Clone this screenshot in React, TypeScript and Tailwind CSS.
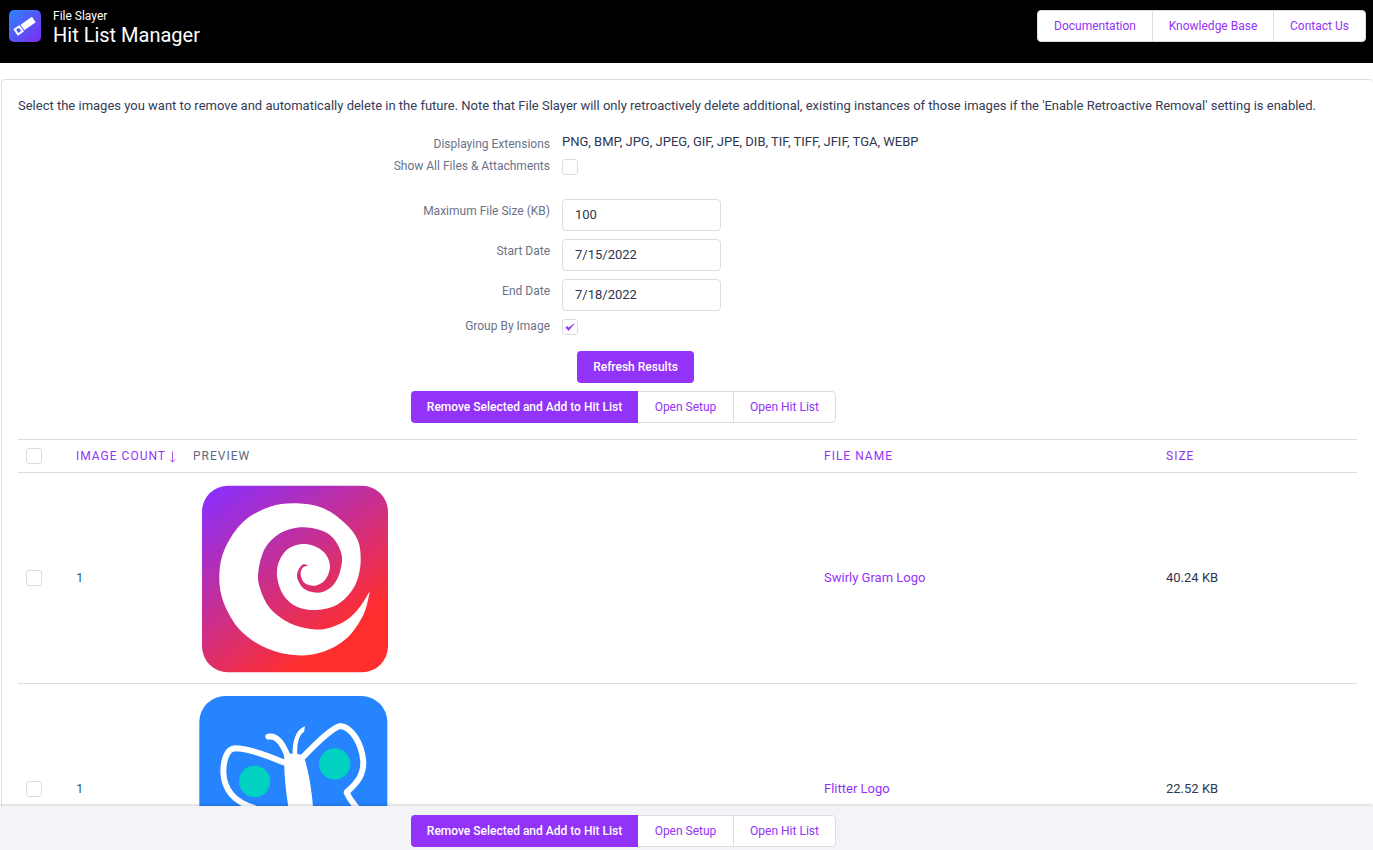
const font = { fontFamily: 'Roboto, "Liberation Sans", sans-serif' };

type Pt = [number, number];

// Catmull-Rom through the points, so the spiral can be traced from the picture
function smooth(points: Pt[]) {
  let d = '';
  for (let i = 0; i < points.length - 1; i++) {
    const p0 = points[i - 1] ?? points[i];
    const p1 = points[i];
    const p2 = points[i + 1];
    const p3 = points[i + 2] ?? p2;
    const c1 = [p1[0] + (p2[0] - p0[0]) / 6, p1[1] + (p2[1] - p0[1]) / 6];
    const c2 = [p2[0] - (p3[0] - p1[0]) / 6, p2[1] - (p3[1] - p1[1]) / 6];
    d += ` C${c1[0]} ${c1[1]} ${c2[0]} ${c2[1]} ${p2[0]} ${p2[1]}`;
  }
  return d;
}

const spiralOut: Pt[] = [
  [540, 348], [520, 420], [470, 490], [400, 530], [320, 541], [230, 520], [150, 465], [100, 380], [88, 300],
  [105, 220], [160, 140], [240, 95], [320, 85], [400, 100], [465, 145], [503, 195], [512, 250], [505, 305],
  [482, 352], [440, 390], [380, 405], [320, 395], [280, 360], [262, 310], [265, 265], [290, 225], [330, 208],
  [370, 212], [405, 235], [420, 275], [405, 315], [375, 332], [345, 325], [332, 300], [338, 278], [355, 272],
];
const spiralBack: Pt[] = [
  [355, 272], [340, 268], [325, 285], [322, 310], [340, 340], [370, 352], [400, 350], [430, 330], [450, 290],
  [455, 240], [430, 190], [390, 165], [330, 157], [270, 175], [225, 220], [205, 290], [210, 340], [240, 400],
  [300, 445], [370, 463], [420, 458], [470, 435], [510, 395], [540, 348],
];

function SwirlyLogo() {
  return (
    <svg viewBox="0 0 630 630" className="h-[210px] w-[210px]">
      <defs>
        <linearGradient id="swirl" gradientUnits="userSpaceOnUse" x1="60" y1="50" x2="400" y2="520">
          <stop offset="0" stopColor="#8b2ffc" />
          <stop offset="1" stopColor="#ff2e2e" />
        </linearGradient>
      </defs>
      <rect x="36" y="32" width="558" height="560" rx="78" fill="url(#swirl)" />
      <path d={`M540 348${smooth(spiralOut)}${smooth(spiralBack)}Z`} fill="#fff" />
    </svg>
  );
}

function FlitterLogo() {
  return (
    <svg viewBox="0 3 630 630" className="h-[210px] w-[210px]">
      <rect x="28" y="33" width="564" height="564" rx="78" fill="#2684ff" />
      <circle cx="194" cy="289" r="47" fill="#00d1c1" />
      <circle cx="434" cy="237" r="47" fill="#00d1c1" />
      <g fill="none" stroke="#fff" strokeWidth="18" strokeLinecap="round" strokeLinejoin="round">
        <path d="M280 232C240 215 180 190 135 190C110 192 100 225 100 262C102 310 130 350 190 368" />
        <path d="M335 220C370 185 415 135 450 123C485 125 515 175 520 230C520 270 505 290 470 322C478 345 495 360 510 380" />
        <path d="M235 155C262 150 280 180 292 212" />
      </g>
      <path d="M308 212C306 170 318 132 345 124L342 140C325 150 320 180 322 212Z" fill="#fff" />
      <path d="M283 205L330 208L345 225C358 270 370 340 372 420L304 420C290 340 280 270 283 205Z" fill="#fff" />
    </svg>
  );
}

function Checkbox({ checked, className }: { checked?: boolean; className?: string }) {
  return (
    <span className={`flex h-4 w-4 items-center justify-center rounded-[3px] border border-[#dcdce6] bg-white ${className ?? ''}`}>
      {checked && (
        <svg viewBox="0 0 12 12" className="h-3 w-3">
          <path d="M1.8 6.6L4.6 9.6L10.2 2.8L4.8 6.8L3 5.4Z" fill="#9333f8" stroke="#9333f8" strokeWidth="0.6" strokeLinejoin="round" />
        </svg>
      )}
    </span>
  );
}

function FormRow({ label, children, className, labelClass }: { label: string; children: React.ReactNode; className?: string; labelClass?: string }) {
  return (
    <div className={`flex ${className ?? ''}`}>
      <span className={`w-[532px] text-right text-xs leading-4 text-[#6b7288] ${labelClass ?? ''}`}>{label}</span>
      <div className="ml-3">{children}</div>
    </div>
  );
}

function TextField({ value }: { value: string }) {
  return (
    <div className="flex h-8 w-[159px] items-center rounded border border-[#dcdce6] pl-3 text-[13px] text-[#2d3650]">
      {value}
    </div>
  );
}

function ActionGroup() {
  return (
    <div className="flex h-8 w-[425px] text-xs font-medium leading-4">
      <button className="w-[227px] rounded-l bg-[#9333f8] text-white">Remove Selected and Add to Hit List</button>
      <button className="w-[95px] border-y border-[#dcdce6] bg-white font-normal text-[#9333f8]">Open Setup</button>
      <button className="w-[103px] rounded-r border border-[#dcdce6] bg-white font-normal text-[#9333f8]">Open Hit List</button>
    </div>
  );
}

const columns = 'grid grid-cols-[58px_117px_631px_342px_1fr] items-center';

function ResultRow({ preview, name, size }: { preview: React.ReactNode; name: string; size: string }) {
  return (
    <div className={`${columns} h-[211px] shrink-0 border-b border-[#dcdce6]`}>
      <div className="pl-2"><Checkbox /></div>
      <span className="text-[13px] text-[#1f5f8a]">1</span>
      <div className="-ml-[3px] translate-y-0.5">{preview}</div>
      <span className="text-[13px] text-[#9333f8]">{name}</span>
      <span className="text-[13px] text-[#2d3650]">{size}</span>
    </div>
  );
}

export default function App() {
  return (
    <div style={font} className="flex h-screen flex-col overflow-hidden bg-white">
      {/* Header */}
      <header className="flex h-[63px] shrink-0 justify-between bg-black pl-[9px] pr-[7px] pt-[10px]">
        <div className="flex">
          <svg viewBox="0 0 32 32" className="h-8 w-8">
            <defs>
              <linearGradient id="brand" x1="0" y1="0" x2="1" y2="1">
                <stop offset="0" stopColor="#2b84ff" />
                <stop offset="1" stopColor="#7e2bf0" />
              </linearGradient>
            </defs>
            <rect width="32" height="32" rx="5" fill="url(#brand)" />
            <g transform="rotate(-35 16 16)" fill="#fff">
              <path d="M4.5 12h7.5v8H4.5zM6.5 14v4H10v-4z" fillRule="evenodd" />
              <path d="M13 12.5h14v6.5H13z" />
            </g>
          </svg>
          <div className="-mt-px ml-3 text-white">
            <div className="text-xs leading-[14px]">File Slayer</div>
            <div className="mt-px text-xl leading-[22px]">Hit List Manager</div>
          </div>
        </div>
        <nav className="flex h-8 rounded border border-[#dcdce6] bg-white text-xs text-[#9333f8]">
          <a className="flex w-[114px] items-center justify-center">Documentation</a>
          <a className="flex w-[121px] items-center justify-center border-l border-[#dcdce6]">Knowledge Base</a>
          <a className="flex w-[92px] items-center justify-center border-l border-[#dcdce6]">Contact Us</a>
        </nav>
      </header>

      {/* Card */}
      <main className="ml-px mt-4 flex min-h-0 flex-1 flex-col overflow-hidden rounded-t border-l border-t border-[#dcdce6] pl-[16px] pr-4">
        <p className="mt-[17px] text-[13px] leading-[17px] text-[#343c58]">
          Select the images you want to remove and automatically delete in the future. Note that File Slayer will only retroactively delete additional, existing instances of those images if the 'Enable Retroactive Removal' setting is enabled.
        </p>

        <div className="mt-[19px]">
          <FormRow label="Displaying Extensions" className="pt-[3px]">
            <span className="relative top-[-2px] block text-[13px] leading-4 text-[#2d3650]">PNG, BMP, JPG, JPEG, GIF, JPE, DIB, TIF, TIFF, JFIF, TGA, WEBP</span>
          </FormRow>
          <FormRow label="Show All Files & Attachments" className="mt-[6px]">
            <Checkbox className="mt-px" />
          </FormRow>
          <FormRow label="Maximum File Size (KB)" labelClass="pt-1" className="mt-[24px]"><TextField value="100" /></FormRow>
          <FormRow label="Start Date" labelClass="pt-1" className="mt-2"><TextField value="7/15/2022" /></FormRow>
          <FormRow label="End Date" labelClass="pt-1" className="mt-2"><TextField value="7/18/2022" /></FormRow>
          <FormRow label="Group By Image" className="mt-[7px]"><Checkbox checked className="mt-px" /></FormRow>
        </div>

        <button className="ml-[559px] mt-4 h-8 w-[117px] shrink-0 rounded bg-[#9333f8] text-xs font-medium text-white">
          Refresh Results
        </button>
        <div className="ml-[393px] mt-2"><ActionGroup /></div>

        {/* Table */}
        <div className={`${columns} mt-4 h-[34px] shrink-0 border-y border-[#dcdce6] text-xs tracking-[1px] text-[#9333f8]`}>
          <div className="pl-2"><Checkbox /></div>
          <span className="flex items-center">
            IMAGE COUNT
            <svg viewBox="0 0 7 12" className="ml-[3px] mt-px h-3 w-[7px]">
              <path d="M3.5 0.5V11M1 8.5L3.5 11.2L6 8.5" fill="none" stroke="#a855f7" strokeWidth="1" />
            </svg>
          </span>
          <span className="text-[#5f6780]">PREVIEW</span>
          <span>FILE NAME</span>
          <span>SIZE</span>
        </div>
        <ResultRow preview={<SwirlyLogo />} name="Swirly Gram Logo" size="40.24 KB" />
        <ResultRow preview={<FlitterLogo />} name="Flitter Logo" size="22.52 KB" />
      </main>

      {/* Sticky actions */}
      <footer className="z-10 h-[44px] shrink-0 bg-[#f3f4f8] pl-[411px] pt-[9px] shadow-[0_-1px_3px_rgba(0,0,0,0.2)]">
        <ActionGroup />
      </footer>
    </div>
  );
}
